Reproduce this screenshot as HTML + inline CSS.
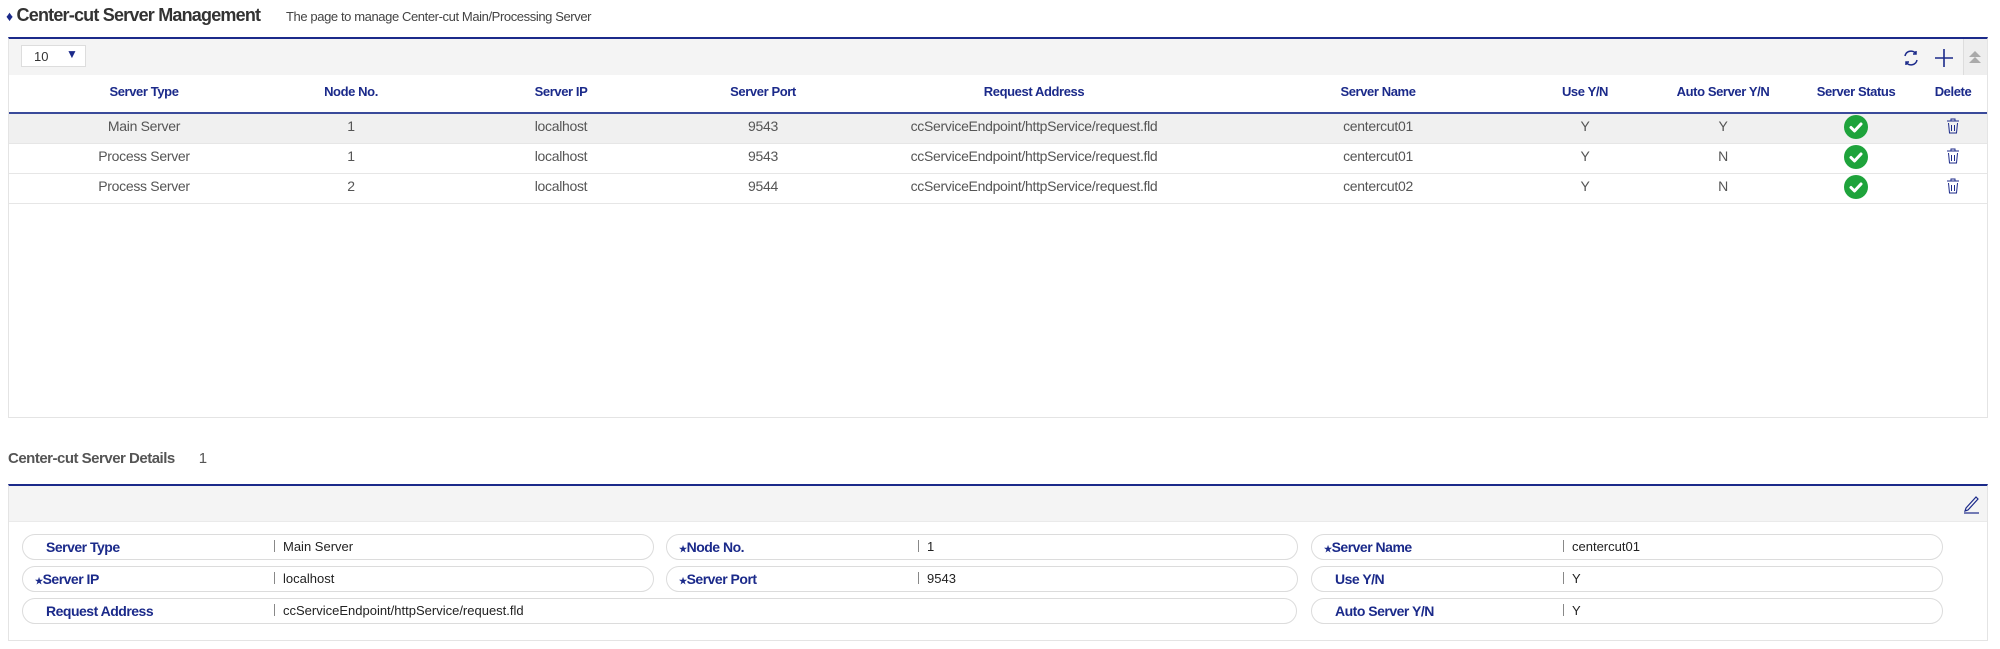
<!DOCTYPE html>
<html><head><meta charset="utf-8"><style>
*{box-sizing:border-box;margin:0;padding:0}
body{width:2000px;height:649px;background:#fff;font-family:"Liberation Sans",sans-serif;position:relative;overflow:hidden;color:#555}
.abs{position:absolute}
.title{left:6px;top:5px;font-size:18px;font-weight:bold;color:#333;letter-spacing:-0.8px}
.sub{left:286px;top:9px;font-size:13px;color:#444;letter-spacing:-0.4px}
.box{left:8px;width:1980px;border-top:2px solid #1b2a8a;border-left:1px solid #e4e4e4;border-right:1px solid #e4e4e4;border-bottom:1px solid #e4e4e4}
.bar{background:#f4f4f4}
.th{font-size:13px;font-weight:bold;color:#1b2a8a;transform:translateX(-50%);letter-spacing:-0.4px;white-space:nowrap}
.td{font-size:14px;color:#555;transform:translateX(-50%);letter-spacing:-0.3px;white-space:nowrap}
.pill{height:26px;border:1px solid #dcdcdc;border-radius:13px;background:#fff}
.lbl{font-size:14px;font-weight:bold;color:#1b2a8a;letter-spacing:-0.5px;white-space:nowrap}
.val{font-size:13px;color:#222;white-space:nowrap}
.val:before{content:"";display:inline-block;width:1px;height:12px;background:#888;margin-right:8px;vertical-align:-1px}
.star{font-size:9px;color:#1b2a8a}
.ok{width:24px;height:24px;border-radius:50%;background:#1ea33b;transform:translateX(-50%)}
</style></head><body>
<div class="abs title"><span style="color:#1b2a8a;font-size:14px">&#9830;</span> Center-cut Server Management</div>
<div class="abs sub">The page to manage Center-cut Main/Processing Server</div>

<div class="abs box" style="top:37px;height:381px">
 <div class="abs bar" style="left:0;top:0;width:1978px;height:36px"></div>
 <div class="abs" style="left:12px;top:6px;width:65px;height:22px;border:1px solid #ddd;background:#fff;font-size:13px;color:#333;padding:3px 0 0 12px">10 <span style="position:absolute;left:44px;top:1px;color:#1b2a8a;font-size:12px">&#9660;</span></div>
 <svg class="abs" style="left:1892px;top:9px" width="20" height="20" viewBox="0 0 20 20" fill="none" stroke="#1b2a8a" stroke-width="1.5"><path d="M4 8a6 6 0 0 1 11-2"/><path d="M15 3v3h-3"/><path d="M16 12a6 6 0 0 1-11 2"/><path d="M5 17v-3h3"/></svg>
 <svg class="abs" style="left:1924px;top:8px" width="22" height="22" viewBox="0 0 22 22" stroke="#1b2a8a" stroke-width="1.6"><path d="M11 2v18M2 11h18"/></svg>
 <div class="abs" style="left:1954px;top:0;width:24px;height:36px;background:#eee;border-left:1px solid #ddd"></div>
 <svg class="abs" style="left:1958px;top:10px" width="16" height="16" viewBox="0 0 16 16" fill="#aaa"><path d="M8 2l6 6H2z"/><path d="M8 8l6 6H2z"/></svg>
 <div class="abs" style="left:0;top:73px;width:1978px;height:2px;background:#3a4a9a"></div>
 <div class="abs" style="left:0;top:75px;width:1978px;height:29px;background:#f0f0f0"></div>
 <div class="abs" style="left:0;top:104px;width:1978px;height:1px;background:#e6e6e6"></div>
 <div class="abs" style="left:0;top:134px;width:1978px;height:1px;background:#e6e6e6"></div>
 <div class="abs" style="left:0;top:164px;width:1978px;height:1px;background:#e6e6e6"></div>
</div>
<div id="cols"></div>

<div class="abs" style="left:8px;top:450px;font-size:15px;font-weight:bold;color:#555;letter-spacing:-0.5px">Center-cut Server Details<span style="font-weight:normal;margin-left:24px">1</span></div>
<div class="abs box" style="top:484px;height:157px">
 <div class="abs bar" style="left:0;top:0;width:1978px;height:36px;border-bottom:1px solid #eaeaea"></div>
 <svg class="abs" style="left:1952px;top:7px" width="20" height="22" viewBox="0 0 20 22" fill="none" stroke="#1b2a8a" stroke-width="1.2"><path d="M5 15L15 4l2 2L7 17l-3 1z"/><path d="M3 20h15"/></svg>
</div>

<script>
var H=[["Server Type",144],["Node No.",351],["Server IP",561],["Server Port",763],["Request Address",1034],["Server Name",1378],["Use Y/N",1585],["Auto Server Y/N",1723],["Server Status",1856],["Delete",1953]];
var R=[["Main Server","1","localhost","9543","ccServiceEndpoint/httpService/request.fld","centercut01","Y","Y"],
["Process Server","1","localhost","9543","ccServiceEndpoint/httpService/request.fld","centercut01","Y","N"],
["Process Server","2","localhost","9544","ccServiceEndpoint/httpService/request.fld","centercut02","Y","N"]];
var s="";
H.forEach(function(h){s+='<div class="abs th" style="left:'+h[1]+'px;top:84px">'+h[0]+'</div>';});
R.forEach(function(r,i){var y=118+i*30;
 for(var j=0;j<8;j++)s+='<div class="abs td" style="left:'+H[j][1]+'px;top:'+y+'px">'+r[j]+'</div>';
 s+='<div class="abs ok" style="left:1856px;top:'+(y-3)+'px"><svg width="24" height="24" viewBox="0 0 24 24"><path d="M7 12.5l3.5 3.5L17 9" fill="none" stroke="#fff" stroke-width="3" stroke-linecap="round" stroke-linejoin="round"/></svg></div>';
 s+='<svg class="abs" style="left:1946px;top:'+(y)+'px" width="14" height="16" viewBox="0 0 14 16" fill="none" stroke="#1b2a8a" stroke-width="1"><path d="M1 3h12M5 3V1h4v2"/><path d="M2.5 5l1 10h7l1-10"/><path d="M5.5 7v6M8.5 7v6"/></svg>';
});
var F=[[22,"Server Type","Main Server",0],[666,"Node No.","1",1],[1311,"Server Name","centercut01",1],
[22,"Server IP","localhost",1],[666,"Server Port","9543",1],[1311,"Use Y/N","Y",0],
[22,"Request Address","ccServiceEndpoint/httpService/request.fld",0],[1311,"Auto Server Y/N","Y",0]];
var rows=[534,566,598];
F.forEach(function(f,i){var y=rows[i<3?0:(i<6?1:2)];
 var w=(i==6)?1275:632;
 s+='<div class="abs pill" style="left:'+f[0]+'px;top:'+y+'px;width:'+w+'px"></div>';
 s+='<div class="abs lbl" style="left:'+(f[0]+(f[3]?13:24))+'px;top:'+(y+5)+'px">'+(f[3]?'<span class="star">&#9733;</span>':'')+f[1]+'</div>';
 s+='<div class="abs val" style="left:'+(f[0]+252)+'px;top:'+(y+5)+'px">'+f[2]+'</div>';
});
document.getElementById("cols").outerHTML=s;
</script>
</body></html>
